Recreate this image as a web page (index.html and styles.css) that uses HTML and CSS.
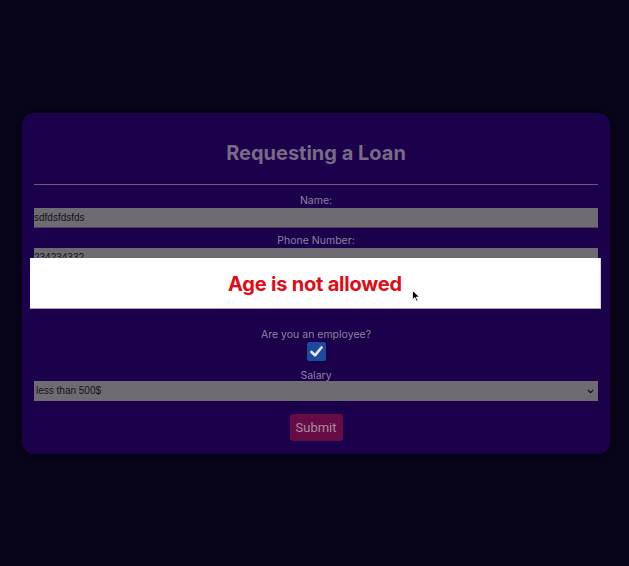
FILE: index.html
```html
<!DOCTYPE html>
<html>
<head>
<meta charset="utf-8">
<link rel="stylesheet" href="styles.css">
</head>
<body>
<main class="page">
  <form class="card">
    <h1 class="title">Requesting a Loan</h1>
    <hr class="rule">
    <div class="field">
      <label class="label">Name:</label>
      <div class="input">sdfdsfdsfds</div>
    </div>
    <div class="field">
      <label class="label">Phone Number:</label>
      <div class="input">234234332</div>
    </div>
    <div class="field">
      <label class="label">Age:</label>
      <div class="input">12</div>
    </div>
    <div class="field field-check">
      <label class="label">Are you an employee?</label>
      <span class="check"><svg width="13" height="11" viewBox="0 0 13 11"><path d="M1.5 6 L5 9.3 L11.5 1.5" fill="none" stroke="#e6e6f0" stroke-width="2.6" stroke-linecap="round" stroke-linejoin="round"/></svg></span>
    </div>
    <div class="field field-salary">
      <label class="label">Salary</label>
      <div class="input select">less than 500$<svg class="chev" width="7" height="5" viewBox="0 0 7 5"><path d="M0.8 0.9 L3.5 3.6 L6.2 0.9" fill="none" stroke="#111" stroke-width="1.3"/></svg></div>
    </div>
    <div class="actions">
      <button type="button" class="submit">Submit</button>
    </div>
  </form>
</main>
<div class="modal">
  <p class="modal-text">Age is not allowed</p>
</div>
<svg class="cursor" width="9" height="13" viewBox="0 0 9 13"><path d="M0.5 0.5 L0.5 9.5 L2.8 7.4 L4.4 11.2 L5.8 10.6 L4.3 7 L7.5 7 Z" fill="#000" stroke="#fff" stroke-width="0.8"/></svg>
</body>
</html>
```
FILE: styles.css
```css
html, body {
  margin: 0;
  padding: 0;
  background: #08041a;
  height: 100%;
  font-family: Inter, "Noto Sans", sans-serif;
}
.page {
  padding: 113px 19px 0 22px;
}
.card {
  background: #1b004c;
  border-radius: 12px;
  padding: 27px 12px 13px;
  box-shadow: 0 0 6px rgba(0,0,0,0.5);
}
.title {
  margin: 0;
  text-align: center;
  font-size: 20px;
  line-height: 26px;
  font-weight: 700;
  color: #776b86;
}
.rule {
  margin: 18px 0 9px;
  border: 0;
  border-top: 1px solid #6c5d82;
  height: 0;
}
.field {
  display: flex;
  flex-direction: column;
  align-items: center;
  margin-bottom: 6px;
}
.label {
  font-size: 10.5px;
  line-height: 14px;
  color: #8c83a0;
  margin-bottom: 0;
}
.input {
  align-self: stretch;
  height: 20px;
  background: #6f6b72;
  border-bottom: 1px solid #4b3f63;
  box-sizing: border-box;
  font-family: "Liberation Sans", Arial, sans-serif;
  font-size: 10px;
  line-height: 20px;
  color: #141414;
  padding: 0;
}
.field-check {
  margin-top: 20px;
}
.check {
  margin-top: 0;
  width: 19px;
  height: 19px;
  border-radius: 2px;
  background: #1d4a9c;
  display: flex;
  align-items: center;
  justify-content: center;
}
.field-salary {
  padding-top: 2px;
}
.field-salary .label {
  margin-bottom: -2px;
}
.select {
  position: relative;
  padding-left: 2px;
  border: 0;
}
.chev {
  position: absolute;
  right: 4px;
  top: 8px;
}
.actions {
  display: flex;
  justify-content: center;
  margin-top: 13px;
}
.submit {
  width: 53px;
  height: 27px;
  border: 0;
  border-radius: 3px;
  background: #670b45;
  color: #a88ca4;
  font-family: Roboto, "Noto Sans", sans-serif;
  font-size: 13px;
  padding: 0;
}
.modal {
  position: fixed;
  left: 30px;
  top: 258px;
  width: 571px;
  height: 51px;
  background: #ffffff;
  border-bottom: 1px solid #a8a0c8;
  border-right: 1px solid #d8d4e8;
  box-sizing: border-box;
  display: flex;
  align-items: center;
  justify-content: center;
  padding-top: 2px;
}
.modal-text {
  margin: 0;
  font-size: 20px;
  font-weight: 700;
  color: #e20a14;
  letter-spacing: -0.2px;
}
.cursor {
  position: fixed;
  left: 412px;
  top: 290px;
}
```
